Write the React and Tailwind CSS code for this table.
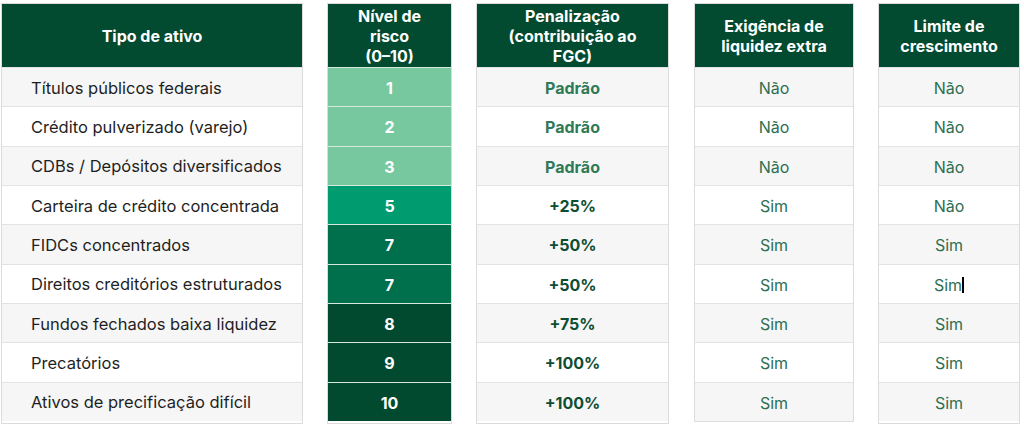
import React from 'react';

// linhas da tabela: ativo, nível de risco, penalização, liquidez extra, limite de crescimento
const rows = [
  { ativo: 'Títulos públicos federais', risco: 1, pen: 'Padrão', liq: 'Não', lim: 'Não' },
  { ativo: 'Crédito pulverizado (varejo)', risco: 2, pen: 'Padrão', liq: 'Não', lim: 'Não' },
  { ativo: 'CDBs / Depósitos diversificados', risco: 3, pen: 'Padrão', liq: 'Não', lim: 'Não' },
  { ativo: 'Carteira de crédito concentrada', risco: 5, pen: '+25%', liq: 'Sim', lim: 'Não' },
  { ativo: 'FIDCs concentrados', risco: 7, pen: '+50%', liq: 'Sim', lim: 'Sim' },
  { ativo: 'Direitos creditórios estruturados', risco: 7, pen: '+50%', liq: 'Sim', lim: 'Sim', caret: true },
  { ativo: 'Fundos fechados baixa liquidez', risco: 8, pen: '+75%', liq: 'Sim', lim: 'Sim' },
  { ativo: 'Precatórios', risco: 9, pen: '+100%', liq: 'Sim', lim: 'Sim' },
  { ativo: 'Ativos de precificação difícil', risco: 10, pen: '+100%', liq: 'Sim', lim: 'Sim' },
];

const riskBg = (n) =>
  n <= 3 ? 'bg-[#77c89e]'
  : n <= 5 ? 'bg-[#009b6f]'
  : n <= 7 ? 'bg-[#006f4b]'
  : 'bg-[#014a2f]';

const font = { fontFamily: 'Inter, "Liberation Sans", sans-serif' };

function Column({ width, title, children }) {
  return (
    <div className={`${width} flex flex-col border border-[#dcdcdc] shrink-0`}>
      <div className="h-[63px] bg-[#024b30] text-white font-bold text-[16px] leading-[20px] flex items-center justify-center text-center px-1">
        {title}
      </div>
      {children}
    </div>
  );
}

function Cell({ i, className = '', children }) {
  return (
    <div
      className={`h-[39.33px] pt-[2px] flex items-center border-t border-[#e3e3e3] ${
        i % 2 === 0 ? 'bg-[#f6f6f6]' : 'bg-white'
      } ${className}`}
    >
      {children}
    </div>
  );
}

export default function App() {
  return (
    <div className="w-[1024px] h-[424px] bg-white pt-[3px] pl-px flex gap-6" style={font}>
      <Column width="w-[302px]" title="Tipo de ativo">
        {rows.map((r, i) => (
          <Cell key={i} i={i} className="pl-[29px] text-[16.5px] text-[#1f1f1f]">{r.ativo}</Cell>
        ))}
      </Column>

      <Column width="w-[125px]" title={<span>Nível de<br />risco<br />(0–10)</span>}>
        {rows.map((r, i) => (
          <div
            key={i}
            className={`h-[39.33px] pt-[2px] flex items-center justify-center border-t border-[#d9e8df] text-white font-bold text-[16px] ${riskBg(r.risco)}`}
          >
            {r.risco}
          </div>
        ))}
      </Column>

      <Column width="w-[193px]" title={<span>Penalização<br />(contribuição ao<br />FGC)</span>}>
        {rows.map((r, i) => (
          <Cell
            key={i}
            i={i}
            className={`justify-center font-bold text-[16px] ${r.pen === 'Padrão' ? 'text-[#2f7a57]' : 'text-[#0d4d32]'}`}
          >
            {r.pen}
          </Cell>
        ))}
      </Column>

      <div className="ml-px">
        <Column width="w-[160px]" title={<span>Exigência de<br />liquidez extra</span>}>
          {rows.map((r, i) => (
            <Cell key={i} i={i} className="justify-center text-[16px] text-[#2d6e51]">{r.liq}</Cell>
          ))}
        </Column>
      </div>

      <Column width="w-[142px]" title={<span>Limite de<br />crescimento</span>}>
        {rows.map((r, i) => (
          <Cell key={i} i={i} className="justify-center text-[16px] text-[#2d6e51]">
            {r.lim}
            {r.caret && <span className="inline-block w-[2px] h-[16px] bg-black" />}
          </Cell>
        ))}
      </Column>
    </div>
  );
}
